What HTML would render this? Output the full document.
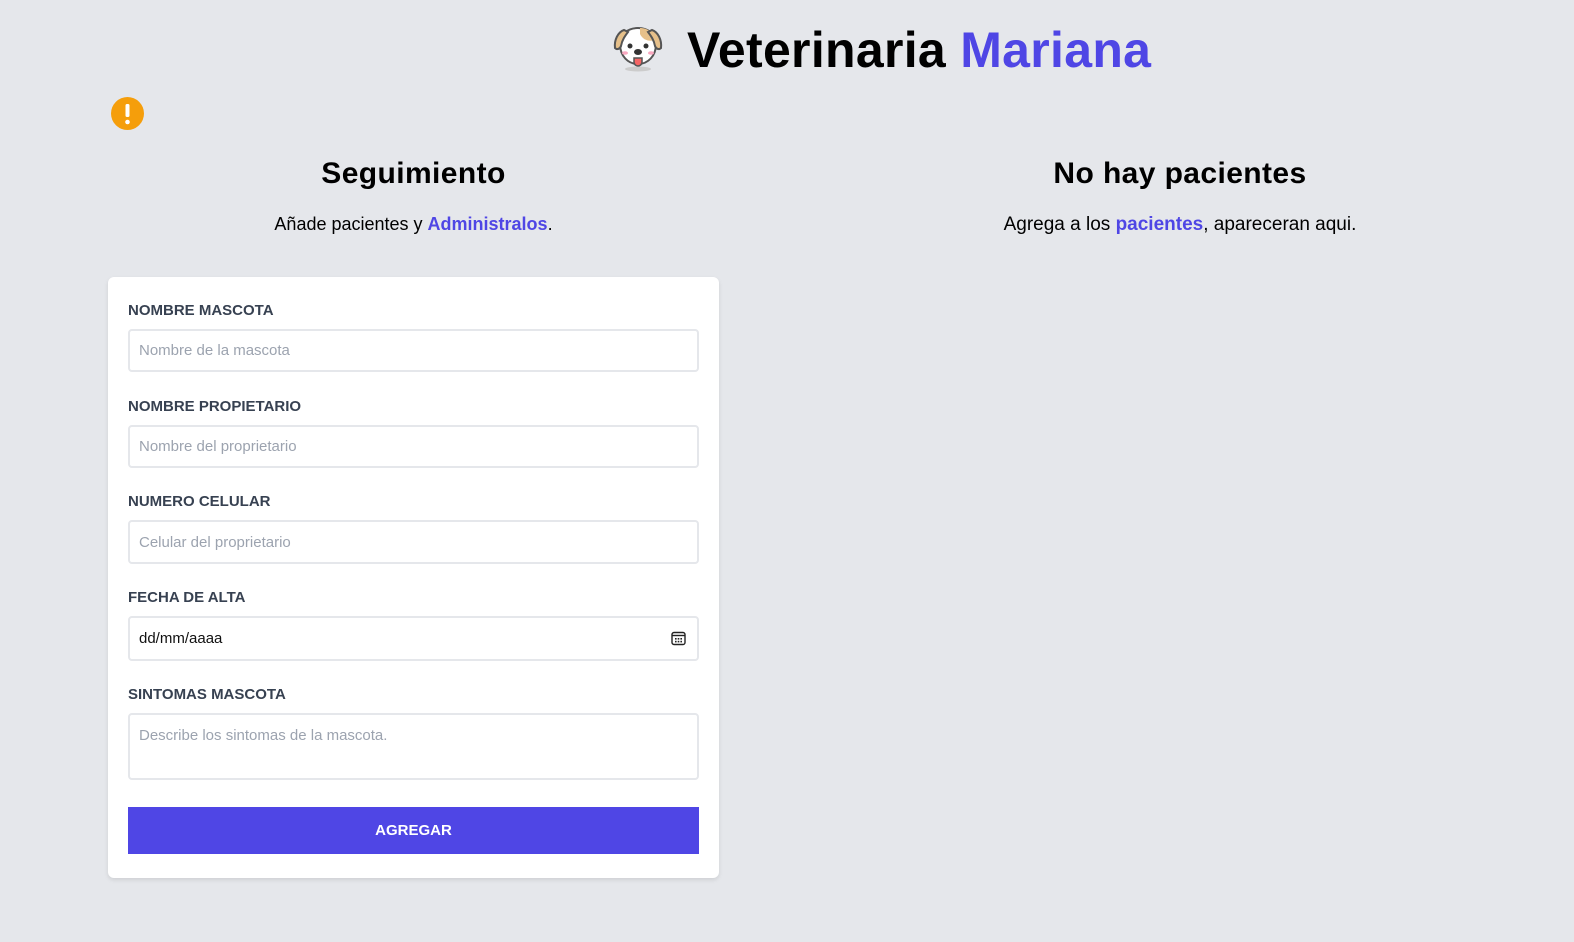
<!DOCTYPE html>
<html><head><meta charset="utf-8"><style>
*{box-sizing:border-box;margin:0;padding:0}
body{width:1574px;height:942px;background:#e5e7eb;font-family:"Liberation Sans",sans-serif;position:relative;overflow:hidden;color:#000}
.title{position:absolute;left:687px;top:21px;font-size:50px;font-weight:900;letter-spacing:0.3px;white-space:nowrap}
.title span{color:#4f46e5}
.h2{position:absolute;font-size:30px;font-weight:bold;text-align:center;letter-spacing:0.4px}
.p{position:absolute;font-size:18px;text-align:center}
.p b{color:#4f46e5}
.card{position:absolute;left:108px;top:277px;width:611px;height:601px;background:#fff;border-radius:6px;box-shadow:0 2px 4px rgba(0,0,0,.1)}
.lab{position:absolute;left:128px;font-size:15px;font-weight:bold;color:#374151}
.in{position:absolute;left:128px;width:571px;border:2px solid #e5e7eb;border-radius:4px;font-size:15px;color:#9ca3af;padding-left:9px;display:flex;align-items:center}
.btn{position:absolute;left:128px;top:807px;width:571px;height:47px;background:#4f46e5;color:#fff;font-weight:bold;font-size:15px;display:flex;align-items:center;justify-content:center}
</style></head><body>
<svg style="position:absolute;left:610px;top:22px" width="56" height="52" viewBox="0 0 56 52">
<ellipse cx="28" cy="47" rx="13" ry="2.5" fill="#ccc"/>
<path d="M10 22c0-10 8-16 18-16s18 6 18 16c0 12-8 20-18 20S10 34 10 22z" fill="#fff" stroke="#555" stroke-width="2"/>
<path d="M30 6c8 0 14 5 15 12-6 2-12 0-15-6z" fill="#e6c08a"/>
<path d="M14 8c-6 2-10 10-9 18 2 2 5 1 6-2 1-6 4-10 7-14z" fill="#e6c08a" stroke="#555" stroke-width="2"/>
<path d="M42 8c6 2 10 10 9 18-2 2-5 1-6-2-1-6-4-10-7-14z" fill="#e6c08a" stroke="#555" stroke-width="2"/>
<circle cx="20" cy="24" r="2.5" fill="#333"/><circle cx="36" cy="24" r="2.5" fill="#333"/>
<ellipse cx="15" cy="31" rx="3" ry="1.8" fill="#f9a8c0"/><ellipse cx="41" cy="31" rx="3" ry="1.8" fill="#f9a8c0"/>
<ellipse cx="28" cy="30" rx="4" ry="3" fill="#333"/>
<path d="M24 36h8v4a4 4 0 0 1-8 0z" fill="#f56565" stroke="#555" stroke-width="1.5"/>
</svg>
<div class="title">Veterinaria <span>Mariana</span></div>
<svg style="position:absolute;left:111px;top:97px" width="33" height="33" viewBox="0 0 33 33"><circle cx="16.5" cy="16.5" r="16.5" fill="#f59e0b"/><rect x="14.5" y="7" width="4" height="13" rx="1.5" fill="#fff"/><circle cx="16.5" cy="25" r="2.3" fill="#fff"/></svg>
<div class="h2" style="left:108px;width:611px;top:157px">Seguimiento</div>
<div class="p" style="left:108px;width:611px;top:214px">Añade pacientes y <b>Administralos</b>.</div>
<div class="h2" style="left:790px;width:780px;top:157px">No hay pacientes</div>
<div class="p" style="left:790px;width:780px;top:214px;font-size:19px">Agrega a los <b>pacientes</b>, apareceran aqui.</div>
<div class="card"></div>
<div class="lab" style="top:302px">NOMBRE MASCOTA</div>
<div class="in" style="top:329px;height:43px">Nombre de la mascota</div>
<div class="lab" style="top:398px">NOMBRE PROPIETARIO</div>
<div class="in" style="top:425px;height:43px">Nombre del proprietario</div>
<div class="lab" style="top:493px">NUMERO CELULAR</div>
<div class="in" style="top:520px;height:44px">Celular del proprietario</div>
<div class="lab" style="top:589px">FECHA DE ALTA</div>
<div class="in" style="top:616px;height:45px;color:#111">dd/mm/aaaa
<svg style="position:absolute;right:11px;top:13px" width="15" height="15" viewBox="0 0 15 15"><rect x="1" y="1.5" width="13" height="12" rx="2" fill="none" stroke="#222" stroke-width="1.4"/><line x1="1" y1="4.5" x2="14" y2="4.5" stroke="#222" stroke-width="1.4"/><g fill="#222"><rect x="4" y="7" width="1.6" height="1.6"/><rect x="6.7" y="7" width="1.6" height="1.6"/><rect x="9.4" y="7" width="1.6" height="1.6"/><rect x="4" y="9.8" width="1.6" height="1.6"/><rect x="6.7" y="9.8" width="1.6" height="1.6"/><rect x="9.4" y="9.8" width="1.6" height="1.6"/></g></svg></div>
<div class="lab" style="top:686px">SINTOMAS MASCOTA</div>
<div class="in" style="top:713px;height:67px;align-items:flex-start;padding-top:12px">Describe los sintomas de la mascota.</div>
<div class="btn">AGREGAR</div>
</body></html>
